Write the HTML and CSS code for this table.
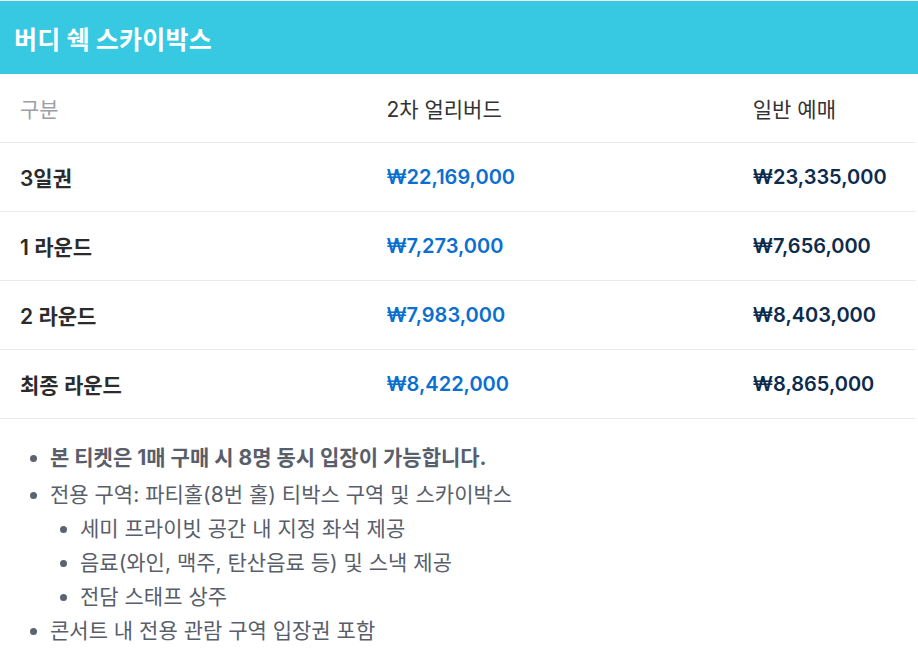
FILE: index.html
```html
<!DOCTYPE html>
<html lang="ko">
<head>
<meta charset="utf-8">
<link rel="stylesheet" href="styles.css">
</head>
<body>
<div class="card">
  <div class="card-head"><h1 class="title">버디 쉑 스카이박스</h1></div>
  <table class="price-table">
    <colgroup><col class="c1"><col class="c2"><col class="c3"></colgroup>
    <thead>
      <tr><th class="th-label">구분</th><th>2차 얼리버드</th><th>일반 예매</th></tr>
    </thead>
    <tbody>
      <tr><td class="name">3일권</td><td class="early">₩22,169,000</td><td class="regular">₩23,335,000</td></tr>
      <tr><td class="name">1 라운드</td><td class="early">₩7,273,000</td><td class="regular">₩7,656,000</td></tr>
      <tr><td class="name">2 라운드</td><td class="early">₩7,983,000</td><td class="regular">₩8,403,000</td></tr>
      <tr><td class="name">최종 라운드</td><td class="early">₩8,422,000</td><td class="regular">₩8,865,000</td></tr>
    </tbody>
  </table>
  <ul class="notes">
    <li class="strong">본 티켓은 1매 구매 시 8명 동시 입장이 가능합니다.</li>
    <li>전용 구역: 파티홀(8번 홀) 티박스 구역 및 스카이박스
      <ul class="sub">
        <li>세미 프라이빗 공간 내 지정 좌석 제공</li>
        <li>음료(와인, 맥주, 탄산음료 등) 및 스낵 제공</li>
        <li>전담 스태프 상주</li>
      </ul>
    </li>
    <li>콘서트 내 전용 관람 구역 입장권 포함</li>
  </ul>
</div>
</body>
</html>
```
FILE: styles.css
```css
html, body {
  margin: 0;
  padding: 0;
  background: #ffffff;
}
body {
  font-family: Inter, "Noto Sans CJK KR", sans-serif;
  color: #333333;
}
.card {
  width: 918px;
  border-top: 1px solid #f0f0f0;
}
.card-head {
  background: #36c9e1;
  height: 73px;
  display: flex;
  align-items: center;
  padding: 0 14px;
}
.title {
  margin: 0;
  font-size: 25px;
  font-weight: 700;
  color: #ffffff;
  letter-spacing: 0.2px;
}
.price-table {
  width: 916px;
  border-collapse: collapse;
  table-layout: fixed;
}
.c1 { width: 40%; }
.c2 { width: 40%; }
.c3 { width: 20%; }
.price-table th,
.price-table td {
  height: 68px;
  padding: 0 20px;
  text-align: left;
  font-size: 21px;
  border-bottom: 1px solid #ebebeb;
  white-space: nowrap;
}
.price-table th {
  font-weight: 400;
  color: #333333;
}
.price-table th.th-label {
  color: #9aa0a6;
}
.name {
  font-weight: 600;
  color: #2b2b2b;
}
.price-table td.early,
.price-table td.regular {
  font-size: 20px;
  font-weight: 600;
}
.early {
  color: #0a6fcf;
}
.regular {
  color: #0d2b4c;
}
.notes {
  margin: 22px 0 0;
  padding-left: 50px;
  font-size: 21px;
  line-height: 34px;
  color: #585e6a;
  list-style-type: disc;
}
.notes li::marker {
  color: #5c6270;
}
.notes .strong {
  font-weight: 700;
  margin-bottom: 3px;
}
.notes .sub {
  margin: 0;
  padding-left: 30px;
  list-style-type: disc;
}
```
